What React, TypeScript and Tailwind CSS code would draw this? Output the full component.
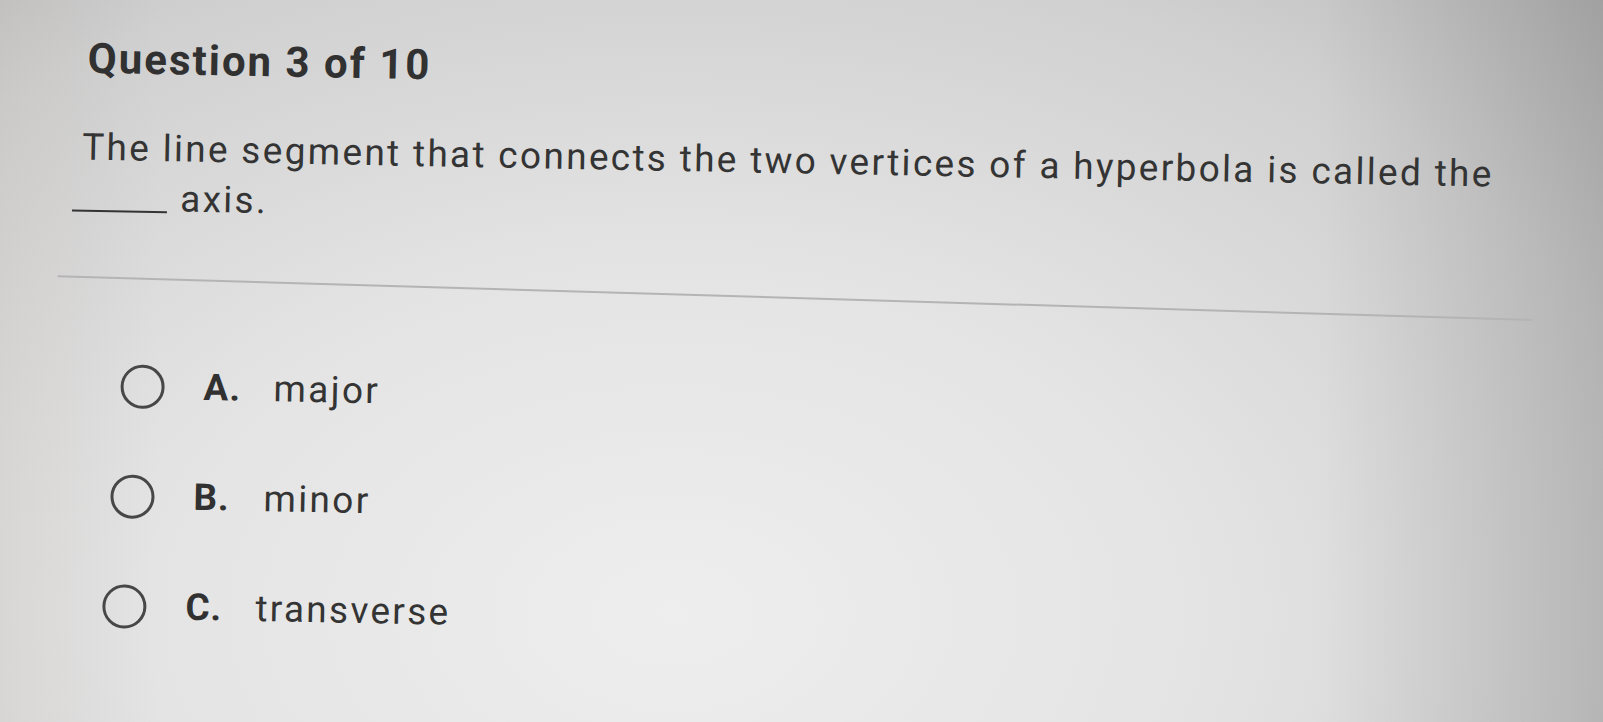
import React from "react";

const options = [
  { letter: "A.", text: "major", indent: "ml-[128px]" },
  { letter: "B.", text: "minor", indent: "ml-[120px]" },
  { letter: "C.", text: "transverse", indent: "ml-[114px]" },
];

function Radio() {
  return (
    <span className="block w-[44px] h-[44px] rounded-full border-[3.5px] border-[#474747] shrink-0" />
  );
}

export default function App() {
  return (
    <div
      className="w-[1603px] h-[722px] overflow-hidden text-[#343434] bg-[linear-gradient(90deg,rgba(120,90,80,0.06)_0%,rgba(0,0,0,0)_10%,rgba(0,0,0,0)_82%,rgba(0,0,0,0.14)_100%),radial-gradient(ellipse_at_42%_85%,#eeeeee_0%,#e4e4e4_40%,#d0d0d0_78%,#bbbbbb_100%)]"
      style={{ fontFamily: "Roboto, 'Liberation Sans', sans-serif" }}
    >
      <div className="rotate-[1.1deg] origin-top-left">
        {/* header */}
        <div className="pt-[36px] pl-[89px]">
          <h1 className="text-[42px] font-bold leading-none tracking-[2px] text-[#313131]">Question 3 of 10</h1>
        </div>

        {/* question */}
        <div className="mt-[43px] pl-[85px] text-[37px] leading-[50px] tracking-[2.3px]">
          <p>The line segment that connects the two vertices of a hyperbola is called the</p>
          <p className="flex items-end -ml-[9px]">
            <span className="inline-block w-[95px] border-b-[2.5px] border-[#343434] mb-[11px]" />
            <span className="ml-[13px]">axis.</span>
          </p>
        </div>

        <div className="mt-[53px] ml-[63px] mr-[65px] h-[2px] bg-[#b4b4b4] rotate-[0.6deg] origin-left" />

        {/* answers */}
        <div className="mt-[86px] flex flex-col gap-[66px]">
          {options.map((o) => (
            <div key={o.letter} className={`flex items-center h-[44px] ${o.indent}`}>
              <Radio />
              <span className="ml-[39px] w-[70px] text-[37px] font-bold tracking-[1px] text-[#313131]">{o.letter}</span>
              <span className="text-[37px] tracking-[2.3px]">{o.text}</span>
            </div>
          ))}
        </div>
      </div>
    </div>
  );
}
